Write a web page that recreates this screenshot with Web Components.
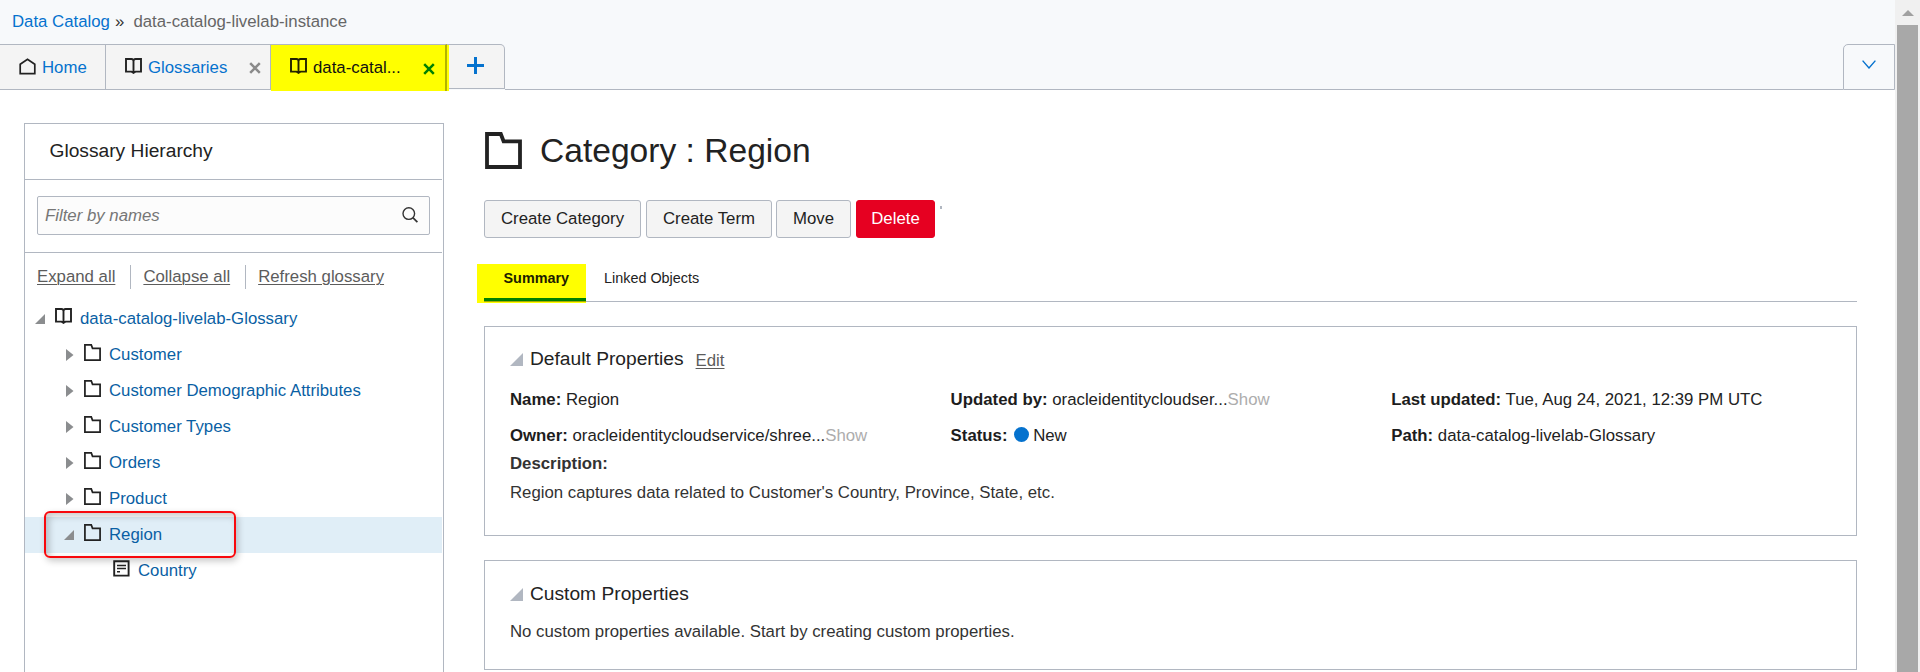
<!DOCTYPE html>
<html lang="en">
<head>
<meta charset="utf-8">
<title>Data Catalog</title>
<style>
html,body{margin:0;height:672px;overflow:hidden;background:#fff}
body{font:16.8px/20px "Liberation Sans",Arial,sans-serif;color:#222}
</style>
</head>
<body>
<dc-app></dc-app>
<script>
const define = (name, html, setup) => {
  const t = document.createElement('template');
  t.innerHTML = html;
  customElements.define(name, class extends HTMLElement {
    constructor() {
      super();
      this.attachShadow({mode: 'open'}).append(t.content.cloneNode(true));
    }
    connectedCallback() { if (setup) setup(this, this.shadowRoot); }
  });
};

const ICONS = {
  home: ['0 0 17 17', '<path d="M1.2 15.6V6.2L8.5 1.2l7.3 5v9.4z" fill="none" stroke="currentColor" stroke-width="1.7"/>'],
  book: ['0 0 17 17', '<path d="M1 1h5.4Q8.5 1.2 8.5 3.2Q8.5 1.2 10.6 1H16V13.6h-5.4L8.5 14.6L6.4 13.6H1zM8.5 2.4v13.6" fill="none" stroke="currentColor" stroke-width="1.9"/>'],
  folder: ['0 0 37 37', '<path d="M2 2H15.8L18.6 9.3H35V35H2z" fill="none" stroke="currentColor" stroke-width="3.8"/>'],
  term: ['0 0 17 17', '<path d="M1.2 1.2h14.4v14.4H1.2z" fill="none" stroke="currentColor" stroke-width="1.9"/><path d="M4 5.4h9M4 8.6h9M4 11.8h3" stroke="currentColor" stroke-width="1.5"/>'],
  open: ['0 0 10 10', '<path d="M0 10L10 0V10z" fill="currentColor"/>'],
  closed: ['0 0 8 12', '<path d="M0 0L8 6L0 12z" fill="currentColor"/>'],
  search: ['0 0 16 16', '<circle cx="6.8" cy="6.6" r="5.8" fill="none" stroke="currentColor" stroke-width="1.4"/><path d="M10.8 10.6l4.6 4.6" stroke="currentColor" stroke-width="1.7"/>'],
  close: ['0 0 12 12', '<path d="M1.2 1.2l9.6 9.6M10.8 1.2l-9.6 9.6" stroke="currentColor" stroke-width="2.5"/>'],
  plus: ['0 0 17 17', '<path d="M8.5 0v17M0 8.5h17" stroke="currentColor" stroke-width="3"/>'],
  chevron: ['0 0 14 9', '<path d="M.6 .6L7 8L13.4 .6" fill="none" stroke="currentColor" stroke-width="1.4"/>'],
  up: ['0 0 12 6', '<path d="M0 6L6 0l6 6z" fill="currentColor"/>']
};
define('dc-icon', '<style>:host{display:block;flex:none}svg{display:block;width:100%;height:100%}</style>', (el, root) => {
  const [box, art] = ICONS[el.getAttribute('name')];
  root.innerHTML += `<svg viewBox="${box}" preserveAspectRatio="none">${art}</svg>`;
});

define('dc-breadcrumb', `
<style>:host{display:flex;height:44px;box-sizing:border-box;padding:12px 0 0 12px;line-height:20px}
a{color:#0572ce}b{font-weight:400;color:#333;margin:0 9px 0 5px;width:9.5px}span{color:#666}</style>
<a>Data Catalog</a><b>»</b><span>data-catalog-livelab-instance</span>`);

define('dc-tab', `
<style>
:host{display:flex;box-sizing:border-box;height:46px;border:1px solid #b1b7c1;border-left:0;background:#f4f4f4;color:#0572ce;padding-top:13px;line-height:20px;position:relative}
.i{width:17px;height:17px;margin:0 6px 0 0;color:#222}
.i dc-icon{height:17px}
.x{width:12px;height:12px;position:absolute;top:17px;right:9px;color:#8a8a8a}
:host([selected]) {background:#ff0;color:#111;border-width:1px 2px 0 0;border-color:#b1b7c1 #b3b300;height:47px;margin-bottom:-1px}
:host([selected]) .i{color:#222200}:host([selected]) .x{color:#008000;top:18px;right:10px}
:host(:not([closable])) .x{display:none}
</style><div class="i"></div><slot></slot><dc-icon class="x" name="close"></dc-icon>`, (el, root) => {
  root.querySelector('.i').innerHTML = `<dc-icon name="${el.getAttribute('icon')}"></dc-icon>`;
});

define('dc-tabbar', `
<style>
:host{display:flex;height:46px}
.edge{width:2px;height:46px;background:#ff0;margin-top:1px;z-index:1}
.add{box-sizing:border-box;width:58px;height:45px;margin-left:-2px;border:1px solid #b1b7c1;border-left:0;border-radius:0 5px 0 0;background:#f4f4f4;color:#0572ce;padding:12px 0 0 20px}
.add dc-icon{width:17px;height:17px}
.fill{flex:1;border-bottom:1px solid #b1b7c1}
.more{box-sizing:border-box;width:52px;border:1px solid #b1b7c1;border-radius:5px 0 0 0;color:#0572ce;padding:15px 0 0 18px}
.more dc-icon{width:14px;height:9px}
</style>
<dc-tab style="width:106px;padding-left:19px" icon="home">Home</dc-tab><dc-tab style="width:165px;padding-left:19px" icon="book" closable>Glossaries</dc-tab><dc-tab style="width:176px;padding-left:19px" icon="book" closable selected>data-catal...</dc-tab><div class="edge"></div><div class="add"><dc-icon name="plus"></dc-icon></div><div class="fill"></div><div class="more"><dc-icon name="chevron"></dc-icon></div>`);

define('dc-tree-row', `
<style>
:host{display:flex;height:36px;box-sizing:border-box;color:#0a5fa4;position:relative;line-height:20px;padding-top:8px}
:host([selected]){background:#e0eef7}
.a{position:relative;width:20px;color:#8b8d8f}
.a dc-icon{width:7.5px;height:12px;margin:4px 0 0 2px}
.a dc-icon[name=open]{width:10px;height:10px;margin:5px 0 0 0}
.i{width:17px;height:17px;color:#222;margin:-1px 8px 0 0}
</style><div class="a"></div><div class="i"></div><slot></slot>`, (el, root) => {
  const s = el.getAttribute('state');
  root.querySelector('.a').innerHTML = s ? `<dc-icon name="${s}"></dc-icon>` : '';
  root.querySelector('.i').innerHTML = `<dc-icon name="${el.getAttribute('icon')}" style="height:17px"></dc-icon>`;
});

define('dc-hierarchy', `
<style>
:host{display:block;box-sizing:border-box;width:420px;height:549px;border:1px solid #b1b7c1;border-bottom:0;padding-right:1px}
h2{margin:0;height:55px;padding-left:24.5px;font:400 19.2px/54px "Liberation Sans",Arial,sans-serif;border-bottom:1px solid #b1b7c1}
.f{box-sizing:content-box;border-bottom:1px solid #b1b7c1;padding:16px 12px 0;height:56px}
.in{box-sizing:border-box;height:39px;border:1px solid #b1b7c1;border-radius:2px;background:#fcfcfc;display:flex;justify-content:space-between;padding:9px 11px 0 7px;color:#767676;font-style:italic}
.in dc-icon{width:16px;height:16px;margin-top:1px;color:#333}
.l{display:flex;height:48px;box-sizing:border-box;padding:12px 0 0 12px;line-height:24px;color:#5c5c5c;margin-bottom:0}
.l a{text-decoration:underline;height:24px;text-underline-offset:2px;text-decoration-thickness:1px}
.l a+a{border-left:1px solid #b1b7c1;padding-left:12px;margin-left:15px}
.t{position:relative}
.mark{position:absolute;left:19px;top:210px;width:192px;height:47px;box-sizing:border-box;border:2px solid #f8080c;border-radius:6px;box-shadow:2px 3px 7px rgba(0,0,0,.22),inset 3px 3px 7px rgba(0,0,0,.22)}
</style>
<h2>Glossary Hierarchy</h2>
<div class="f"><div class="in"><span>Filter by names</span><dc-icon name="search"></dc-icon></div></div>
<div class="l"><a>Expand all</a><a>Collapse all</a><a>Refresh glossary</a></div>
<div class="t">
<dc-tree-row style="padding-left:10px" state="open" icon="book">data-catalog-livelab-Glossary</dc-tree-row>
<dc-tree-row style="padding-left:39px" state="closed" icon="folder">Customer</dc-tree-row>
<dc-tree-row style="padding-left:39px" state="closed" icon="folder">Customer Demographic Attributes</dc-tree-row>
<dc-tree-row style="padding-left:39px" state="closed" icon="folder">Customer Types</dc-tree-row>
<dc-tree-row style="padding-left:39px" state="closed" icon="folder">Orders</dc-tree-row>
<dc-tree-row style="padding-left:39px" state="closed" icon="folder">Product</dc-tree-row>
<dc-tree-row style="padding-left:39px" state="open" icon="folder" selected>Region</dc-tree-row>
<dc-tree-row style="padding-left:68px" icon="term">Country</dc-tree-row>
<div class="mark"></div>
</div>`);

define('dc-button', `
<style>:host{display:block;box-sizing:border-box;height:38px;border:1px solid #b1b7c1;border-radius:3px;background:#f4f4f4;color:#222;line-height:36px;text-align:center}
:host([danger]){background:#e60021;border-color:#e60021;color:#fff}</style><slot></slot>`);

define('dc-field', `
<style>:host{display:flex;line-height:20px;white-space:pre}b{color:#1d1d1d}.s{color:#adadad}</style><b></b><span> <slot></slot></span><span class="s"></span>`, (el, root) => {
  root.querySelector('b').textContent = el.getAttribute('label') + ':';
  root.querySelector('.s').textContent = el.getAttribute('more') || '';
});

define('dc-card', `
<style>:host{display:block;box-sizing:border-box;width:1373px;border:1px solid #b1b7c1;padding-left:25px}
header{display:flex;padding-top:20px;height:25px}
header dc-icon{width:13px;height:13px;color:#b1b7c1;margin:6px 7px 0 0}
h3{margin:0;font:400 19.2px/24px "Liberation Sans",Arial,sans-serif}
.e{color:#5c5c5c;text-decoration:underline;text-underline-offset:2px;text-decoration-thickness:1px;margin:4px 0 0 12px}</style>
<header><dc-icon name="open"></dc-icon><h3></h3><div class="e"><slot name="action"></slot></div></header><slot></slot>`, (el, root) => {
  root.querySelector('h3').textContent = el.getAttribute('heading');
});

define('dc-detail', `
<style>
:host{display:block;flex:none;width:1380px}
.h{display:flex;height:40px;padding-top:9px}
.h dc-icon{width:37px;height:37px;color:#222;margin:0 18px 0 1px}
h1{margin:0;font:400 33.6px/38px "Liberation Sans",Arial,sans-serif}
.b{display:flex;padding-top:28px;height:38px}
.dot{width:2px;height:3px;background:#b1b7c1;margin:6px 0 0 5px}
.tabs{display:flex;margin:26px 0 0 -7px;height:39px;font-size:14.4px;width:1380px}
.sum{box-sizing:border-box;width:109px;background:#ff0;font-weight:700;padding:4px 0 0 26.5px;color:#1d1d00;position:relative}
.sum i{position:absolute;left:7px;top:34px;right:0;height:3px;background:#008000;border-bottom:1px solid #a6ad00}
.rest{flex:1;height:37px;border-bottom:1px solid #b1b7c1;padding-left:18px;line-height:28px}
.grid{display:grid;grid-template-columns:440.6px 440.6px 1fr;grid-auto-rows:36px;padding-top:18px}
.dotb{display:inline-block;width:15px;height:15px;border-radius:50%;background:#0572ce;margin:0 4px 0 2px;vertical-align:-1px;line-height:0}
.d{margin-top:-8px;line-height:20px;color:#333}.d b{display:block;margin-bottom:9px}
</style>
<div class="h"><dc-icon name="folder"></dc-icon><h1>Category : Region</h1></div>
<div class="b"><dc-button style="width:157px">Create Category</dc-button><dc-button style="width:126px;margin-left:5px">Create Term</dc-button><dc-button style="width:75px;margin-left:4px">Move</dc-button><dc-button danger style="width:79px;margin-left:5px">Delete</dc-button><div class="dot"></div></div>
<div class="tabs"><div class="sum">Summary<i></i></div><div class="rest">Linked Objects</div></div>
<dc-card heading="Default Properties" style="margin-top:23px;height:210px"><span slot="action">Edit</span>
<div class="grid"><dc-field label="Name">Region</dc-field><dc-field label="Updated by" more="Show">oracleidentitycloudser...</dc-field><dc-field label="Last updated">Tue, Aug 24, 2021, 12:39 PM UTC</dc-field>
<dc-field label="Owner" more="Show">oracleidentitycloudservice/shree...</dc-field><dc-field label="Status"><i class="dotb"></i>New</dc-field><dc-field label="Path">data-catalog-livelab-Glossary</dc-field></div>
<div class="d"><b>Description:</b>Region captures data related to Customer's Country, Province, State, etc.</div></dc-card>
<dc-card heading="Custom Properties" style="margin-top:24px;height:110px;padding-top:1px"><div style="padding-top:15px;color:#333">No custom properties available. Start by creating custom properties.</div></dc-card>`);

define('dc-scrollbar', `
<style>:host{display:block;width:25px;height:672px;box-sizing:border-box;background:#f0f0f0;padding:10px 2px 0}
dc-icon{width:12px;height:6px;color:#a0a0a0;margin-left:5px}div{margin-top:9px;height:660px;background:#a8a8a8}</style><dc-icon name="up"></dc-icon><div></div>`);

define('dc-app', `
<style>:host{display:flex;width:1920px;height:672px;overflow:hidden}
main{width:1895px;flex:none}
.top{background:#f7f9fb;height:90px}
.c{display:flex;padding:33px 0 0 24px;gap:40px;height:549px}
</style>
<main><div class="top"><dc-breadcrumb></dc-breadcrumb><dc-tabbar></dc-tabbar></div>
<div class="c"><dc-hierarchy></dc-hierarchy><dc-detail></dc-detail></div></main><dc-scrollbar></dc-scrollbar>`);
</script>
</body>
</html>
